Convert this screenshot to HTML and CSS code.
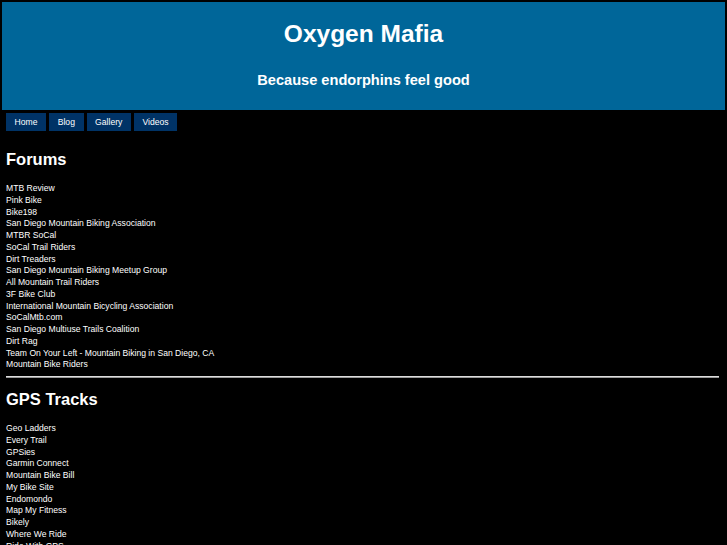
FILE: index.html
```html
<!DOCTYPE html>
<html lang="en">

<head>
    <meta charset="UTF-8">
    <title>Oxygen Mafia</title>
    <link rel="stylesheet" href="styles.css">
</head>

<body>
    <div class="header">
        <div class="title">Oxygen Mafia</div>
        <div class="tagline">Because endorphins feel good</div>
    </div>

    <div class="nav">
        <a href="#">Home</a>
        <a href="#">Blog</a>
        <a href="#">Gallery</a>
        <a href="#">Videos</a>
    </div>

    <div class="content">
        <h2>Forums</h2>
        <ul class="links">
            <li><a href="#">MTB Review</a></li>
            <li><a href="#">Pink Bike</a></li>
            <li><a href="#">Bike198</a></li>
            <li><a href="#">San Diego Mountain Biking Association</a></li>
            <li><a href="#">MTBR SoCal</a></li>
            <li><a href="#">SoCal Trail Riders</a></li>
            <li><a href="#">Dirt Treaders</a></li>
            <li><a href="#">San Diego Mountain Biking Meetup Group</a></li>
            <li><a href="#">All Mountain Trail Riders</a></li>
            <li><a href="#">3F Bike Club</a></li>
            <li><a href="#">International Mountain Bicycling Association</a></li>
            <li><a href="#">SoCalMtb.com</a></li>
            <li><a href="#">San Diego Multiuse Trails Coalition</a></li>
            <li><a href="#">Dirt Rag</a></li>
            <li><a href="#">Team On Your Left - Mountain Biking in San Diego, CA</a></li>
            <li><a href="#">Mountain Bike Riders</a></li>
        </ul>
        <hr>
        <h2 class="after-rule">GPS Tracks</h2>
        <ul class="links">
            <li><a href="#">Geo Ladders</a></li>
            <li><a href="#">Every Trail</a></li>
            <li><a href="#">GPSies</a></li>
            <li><a href="#">Garmin Connect</a></li>
            <li><a href="#">Mountain Bike Bill</a></li>
            <li><a href="#">My Bike Site</a></li>
            <li><a href="#">Endomondo</a></li>
            <li><a href="#">Map My Fitness</a></li>
            <li><a href="#">Bikely</a></li>
            <li><a href="#">Where We Ride</a></li>
            <li><a href="#">Ride With GPS</a></li>
        </ul>
    </div>
</body>

</html>
```

FILE: styles.css
```css
body {
    margin: 2px;
    background-color: #000;
    color: #fff;
    font-family: "Liberation Sans", Arial, sans-serif;
}

.header {
    background-color: #006699;
    height: 108px;
    display: flex;
    flex-direction: column;
    align-items: center;
    text-align: center;
}

.title {
    font-size: 24.5px;
    font-weight: bold;
    margin-top: 18px;
}

.tagline {
    font-size: 14.6px;
    font-weight: bold;
    margin-top: 24px;
}

.nav {
    display: flex;
    gap: 3px;
    padding: 3px 4px 0;
}

.nav a {
    background-color: #003366;
    color: #fff;
    text-decoration: none;
    font-size: 8.6px;
    height: 18px;
    line-height: 18px;
    padding: 0 8.6px;
}

.content {
    padding: 0 4px;
}

h2 {
    font-size: 16.5px;
    margin: 19px 0 14px;
}

h2.after-rule {
    margin-top: 12px;
}

.links {
    list-style: none;
    margin: 0;
    padding: 0;
}

.links li {
    font-size: 8.6px;
    line-height: 11.75px;
}

.links a {
    color: #fff;
    text-decoration: none;
}

hr {
    margin: 5px 2px 0 0;
    border: none;
    border-top: 1px solid #ddd;
    border-bottom: 1px solid #999;
}
```
